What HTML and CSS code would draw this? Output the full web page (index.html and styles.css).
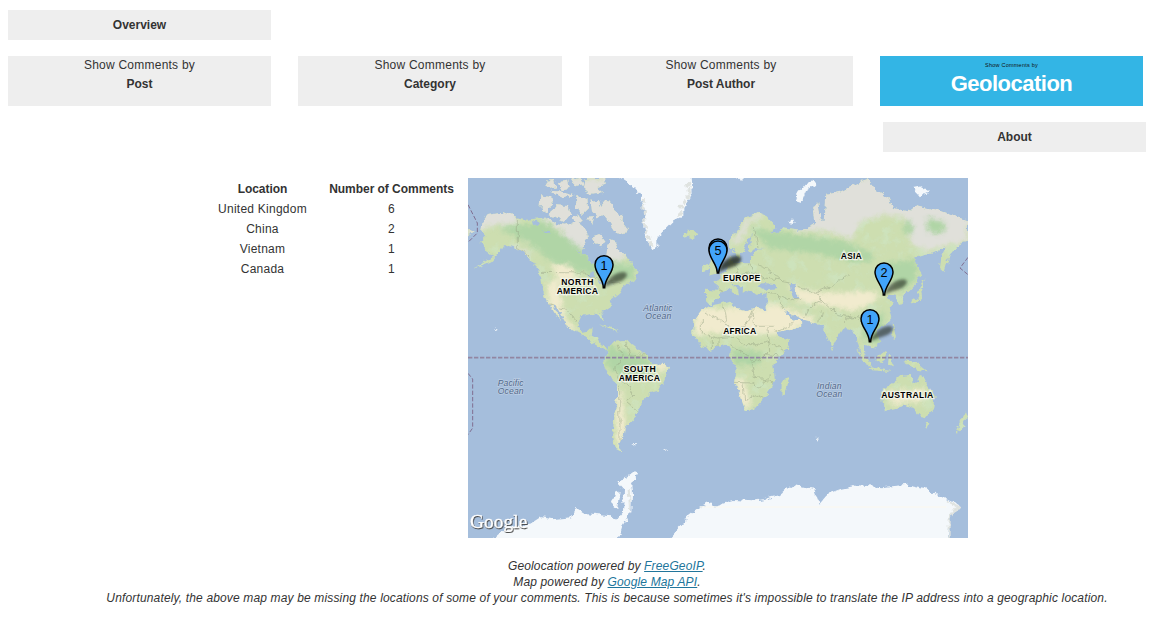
FILE: index.html
```html
<!DOCTYPE html>
<html lang="en">
<head>
<meta charset="utf-8">
<title>Comments by Geolocation</title>
<link rel="stylesheet" href="styles.css">
</head>
<body>
<nav>
  <a class="tab single">Overview</a>
  <div class="tabs">
    <a class="tab"><span>Show Comments by</span><b>Post</b></a>
    <a class="tab"><span>Show Comments by</span><b>Category</b></a>
    <a class="tab"><span>Show Comments by</span><b>Post Author</b></a>
    <a class="tab active"><span>Show Comments by</span><b>Geolocation</b></a>
  </div>
  <a class="tab single about">About</a>
</nav>
<main>
  <table>
    <thead><tr><th class="loc">Location</th><th class="num">Number of Comments</th></tr></thead>
    <tbody>
      <tr><td>United Kingdom</td><td>6</td></tr>
      <tr><td>China</td><td>2</td></tr>
      <tr><td>Vietnam</td><td>1</td></tr>
      <tr><td>Canada</td><td>1</td></tr>
    </tbody>
  </table>
  <svg class="map" width="500" height="360" viewBox="0 0 1500 1080">
    <defs>
      <filter id="rough" x="0" y="0" width="1500" height="1080" filterUnits="userSpaceOnUse">
        <feTurbulence type="fractalNoise" baseFrequency=".05" numOctaves="3" seed="4"/>
        <feDisplacementMap in="SourceGraphic" scale="20" xChannelSelector="R" yChannelSelector="G"/>
      </filter>
      <filter id="soft" x="-30%" y="-30%" width="160%" height="160%"><feGaussianBlur stdDeviation="8"/></filter>
      <filter id="blur" x="-30%" y="-50%" width="160%" height="200%"><feGaussianBlur stdDeviation="4"/></filter>
      <filter id="speckle" x="0" y="0" width="1500" height="1080" filterUnits="userSpaceOnUse">
        <feTurbulence type="fractalNoise" baseFrequency=".025" numOctaves="4" seed="9"/>
        <feColorMatrix values="0 0 0 0 .62  0 0 0 0 .80  0 0 0 0 .58  4 0 0 0 -2"/>
      </filter>
      <clipPath id="land">
        <path d="M45 125L60 108 100 102 145 118 180 125 215 120 250 130 275 148 300 165 300 195 330 225 355 232 380 262 400 275 415 240 418 200 440 195 455 220 475 235 490 262 515 285 500 310 470 320 455 345 430 365 425 385 400 402 408 425 396 420 385 405 340 415 328 440 342 462 362 458 372 447 368 470 390 478 398 500 418 512 412 520 385 502 360 485 330 465 302 450 285 420 262 380 252 378 280 430 265 415 240 370 225 340 220 300 200 260 185 240 160 215 130 205 105 205 90 228 70 250 20 272 75 235 50 215 40 190 55 175 40 155Z"/>
        <path d="M418 512L440 488 470 486 496 500 520 520 545 545 548 556 585 558 600 568 586 605 570 638 545 645 530 668 512 690 508 710 485 735 470 750 468 768 450 800 465 825 440 812 432 780 440 706 448 656 450 618 425 596 404 552 418 530Z"/>
        <path d="M714 370L714 335 748 338 750 322 735 312 756 298 778 275 782 255 790 235 798 255 840 256 852 235 865 215 895 213 860 212 842 220 845 190 855 165 838 185 825 225 810 242 802 220 786 212 786 190 816 140 836 115 871 105 896 115 926 150 906 162 931 165 946 148 961 150 990 155 1015 152 1040 142 1035 100 1050 70 1058 125 1070 130 1075 50 1120 40 1180 10 1200 0 1207 25 1260 58 1275 90 1320 100 1345 82 1410 97 1500 128 1500 190 1470 200 1445 230 1430 282 1416 270 1420 235 1435 205 1410 218 1370 228 1335 240 1345 262 1360 285 1340 320 1315 345 1300 350 1308 378 1293 380 1280 350 1262 348 1255 360 1278 368 1262 390 1270 420 1250 445 1225 458 1240 490 1210 512 1188 495 1188 520 1198 545 1180 525 1170 490 1150 450 1130 447 1090 508 1064 444 1045 435 1005 425 965 402 946 392 975 428 998 425 1000 445 922 464 905 425 896 385 896 345 865 350 846 335 831 345 811 320 790 322 816 345 806 358 782 330 761 345 748 365 725 380Z"/>
        <path d="M721 385L786 370 796 390 836 400 866 390 898 395 916 440 931 475 966 485 955 515 916 560 921 611 899 640 886 666 861 694 831 696 821 666 801 616 806 571 786 536 790 515 771 500 726 515 701 505 676 470 676 430 701 395Z"/>
        <path d="M941 616L951 602 965 596 951 650 940 650ZM1240 641L1280 611 1300 594 1325 591 1335 611 1350 614 1358 588 1375 621 1400 656 1395 696 1375 721 1355 716 1335 691 1315 681 1280 691 1248 699ZM1370 735L1384 735 1378 749ZM1494 700L1500 718 1478 756 1462 768 1470 746Z"/>
        <path d="M725 295L723 260 735 238 748 250 752 285 738 292ZM705 280L706 262 720 258 722 275ZM650 170L660 158 682 160 688 172 670 185Z"/>
        <path d="M1375 300L1360 340 1362 360 1330 382 1325 374 1350 358 1360 320ZM1272 430L1278 450 1284 482 1270 478ZM1225 536L1245 518 1255 522 1248 555 1222 552ZM1168 516L1195 540 1210 565 1192 558ZM1210 568L1260 578 1268 582 1205 576ZM1262 535L1275 535 1268 550 1275 565 1260 560ZM1310 547L1345 552 1380 580 1350 576 1325 568ZM1088 508L1096 508 1094 520ZM390 438L430 450 455 462 420 452Z"/>
        <path d="M220 52L250 58 255 80 240 88 240 105 218 90ZM262 82L300 84 308 108 290 130 265 118 245 112ZM215 125L245 120 262 142 240 146ZM262 135L290 140 325 130 352 152 360 180 345 205 340 228 300 200 270 170 258 155ZM368 68L392 66 398 85 412 68 430 72 440 98 462 112 460 130 480 155 465 172 440 158 425 135 405 112 388 118 372 100ZM325 55L358 60 360 90 340 110 325 90ZM310 118L330 112 345 130 325 138ZM352 120L375 118 370 140ZM235 8L258 5 262 25 240 30ZM270 12L300 8 305 30 280 35ZM310 5L335 0 345 18 322 25ZM245 38L290 42 320 50 280 58ZM350 0L408 0 410 20 385 28 405 45 370 50 345 28ZM375 175L395 168 410 190 400 205 380 195ZM425 185L450 195 440 215 420 210ZM0 150L20 160 0 172Z"/>
      </clipPath>
    </defs>
    <rect width="1500" height="1080" fill="#a5bedc"/>
    <g filter="url(#rough)">
      <g clip-path="url(#land)">
        <rect width="1500" height="1080" fill="#cddeb0"/>
        <rect width="1500" height="1080" filter="url(#speckle)" opacity=".5"/>
        <g filter="url(#soft)">
          <path fill="#e0e0da" d="M0 90L150 90 145 135 60 145 0 180ZM210 110L280 160 340 240 460 250 480 220 500 0 200 0ZM970 0L1500 0 1500 190 1440 200 1380 220 1330 200 1310 120 1250 110 1180 130 1150 185 1090 160 980 158ZM160 165L205 175 200 205 165 190ZM130 200L180 220 190 240 140 215ZM786 205L830 130 870 105 890 115 850 130 815 190Z"/>
          <path fill="#b0d5a6" d="M90 150L230 130 370 235 500 265 500 310 410 300 340 280 260 260 190 200ZM850 150L960 165 1130 190 1220 230 1210 250 1130 250 1060 230 900 210ZM1250 260L1340 240 1350 300 1300 340 1270 310ZM1310 130L1330 130 1335 170 1305 165ZM1375 120L1430 130 1430 165 1380 165ZM420 500L545 545 560 590 470 600 410 560ZM790 510L890 525 870 560 800 560ZM1190 440L1250 400 1240 500 1180 480Z"/>
          <path fill="#f1ebce" d="M240 310L270 305 290 420 330 460 300 455 240 380ZM250 255L310 265 330 320 270 310ZM680 390L900 390 920 470 780 465 680 470ZM895 370L1010 410 1050 430 920 470ZM1000 335L1080 345 1210 340 1240 355 1160 400 1060 380 980 370ZM800 605L830 600 850 690 815 680ZM1255 645L1370 630 1370 670 1270 680ZM560 548L605 555 575 590ZM445 620L460 640 475 750 460 820 446 800ZM960 320L1000 330 990 360Z"/>
        </g>
        <path fill="#a5bedc" d="M868 325L885 315 920 318 930 330 895 335ZM965 315L985 315 980 335 992 362 980 365 968 340ZM350 290L375 280 385 298ZM392 306L425 316 402 322ZM220 155L245 160 240 168ZM195 125L215 135 200 145Z"/>
        <g fill="none" stroke="#96a184" stroke-width="2" opacity=".7">
          <path d="M148 118V208L190 235M222 283L350 285 380 300 440 315 460 315M242 380L285 392 310 405 325 432M450 500L465 535 440 570 455 610 480 620 500 650 475 670 510 700M455 620L456 800M470 490L490 535 530 530 545 545"/>
          <path d="M716 405L745 420 800 460 840 430 855 398 860 445 920 445M700 420V465L745 480 800 475 825 500 865 500 905 490 950 520M765 380L775 440 800 460M730 480V510M750 480V510M790 500L830 525 855 550 900 530 940 535M802 613L850 615 875 630 910 595M825 616L830 670 870 650 890 660M850 550L860 600 890 600 915 620M900 450L905 520 875 550"/>
          <path d="M752 335L765 342M770 290L790 310 820 300 845 310 860 290 840 256M800 260L810 290 850 280 890 300 930 305M860 150L870 210M870 260L895 270 940 310 965 315M992 325L1030 340 1060 365 1025 390 1010 420M1055 360L1110 410 1170 420 1190 450 1235 440M1060 400L1055 430M1130 440L1145 410 1170 430M1195 440L1210 480M890 345L930 350 960 365 1000 365M930 350L945 390M920 460L960 445 975 430M1040 345L1090 325 1140 290"/>
        </g>
      </g>
      <g fill="#f4f8fb">
        <path d="M450 -5L490 20 516 50 531 100 526 150 536 190 555 215 571 200 571 180 596 150 616 130 646 115 646 90 671 50 668 -5Z"/>
        <path d="M70 1090L115 1052 185 1040 220 1018 255 1024 310 1018 325 990 350 1005 430 1012 440 1030 465 1000 468 935 445 910 485 900 510 885 490 920 492 950 490 1000 465 1040 450 1090Z"/>
        <path d="M595 1090L640 1045 655 1020 700 985 720 975 740 985 800 966 850 970 890 962 940 950 975 920 1040 937 1055 980 1085 945 1120 932 1170 922 1240 928 1320 920 1370 930 1430 960 1475 980 1445 1020 1440 1090Z"/>
        <path d="M990 45L1010 20 1035 5 1045 20 1015 40 1000 75 983 70ZM1335 30L1360 25 1385 40 1355 55ZM810 -5H830L820 15ZM960 132L975 122 980 135ZM475 900L500 880 510 890 485 920ZM446 935L458 940 450 995 430 980ZM1043 778L1052 780 1048 788ZM490 795L505 796 500 802ZM78 448L88 454 82 456Z"/>
        <path d="M590 812L600 820" stroke="#f4f8fb" stroke-width="3"/>
      </g>
      <g fill="none" stroke="#dfe3e0" stroke-width="9"><path d="M658 15L666 50 640 80 638 115M526 60L533 160 550 205" stroke-dasharray="14 5"/><path d="M1440 970L1470 985 1445 1020V1090M482 935L486 990" stroke-width="6"/></g>
    </g>
    <path d="M695 987H1435" stroke="#faf9f2" stroke-width="5"/>
    <path d="M0 539H1500" stroke="#9286a2" stroke-width="5" stroke-dasharray="13 5"/>
    <g fill="none" stroke="#806f91" stroke-width="3" stroke-dasharray="13 6"><path d="M0 80L28 135V165L0 193M0 586L14 603V750L0 770M1500 238L1476 270 1500 290"/></g>
    <g class="continent">
      <text x="328" y="321" textLength="97">NORTH</text><text x="328" y="348" textLength="124">AMERICA</text>
      <text x="821" y="308" textLength="112">EUROPE</text><text x="815" y="467" textLength="99">AFRICA</text>
      <text x="1150" y="243" textLength="63">ASIA</text><text x="515" y="582" textLength="96">SOUTH</text>
      <text x="514" y="609" textLength="124">AMERICA</text><text x="1318" y="660" textLength="156">AUSTRALIA</text>
    </g>
    <g class="ocean">
      <text x="570" y="399" textLength="88">Atlantic</text><text x="571" y="423" textLength="78">Ocean</text>
      <text x="128" y="624" textLength="78">Pacific</text><text x="128" y="648" textLength="78">Ocean</text>
      <text x="1084" y="632" textLength="74">Indian</text><text x="1084" y="656" textLength="78">Ocean</text>
    </g>
    <defs>
      <g id="pin">
        <path d="M0 0C7-20 22-38 45-45 70-53 77-37 58-24 43-14 18-12 0 0Z" fill="#252d22" opacity=".62" filter="url(#blur)"/>
        <path d="M-2 0C-2-28-27-43-27-69A27 27 0 0 1 27-69C27-43 2-28 2 0Z" fill="#42a4fa" stroke="#000" stroke-width="4.5"/>
      </g>
    </defs>
    <g class="count">
      <use href="#pin" x="408" y="329"/><text x="408" y="276">1</text>
      <use href="#pin" x="750" y="279"/><use href="#pin" x="750" y="285"/><text x="750" y="230">5</text>
      <use href="#pin" x="1248" y="351"/><text x="1248" y="297">2</text>
      <use href="#pin" x="1206" y="491"/><text x="1206" y="437">1</text>
    </g>
    <text class="logo" x="6" y="1049" textLength="172">Google</text>
  </svg>
</main>
<footer>
  <p>Geolocation powered by <a>FreeGeoIP</a>.</p>
  <p>Map powered by <a>Google Map API</a>.</p>
  <p class="note">Unfortunately, the above map may be missing the locations of some of your comments. This is because sometimes it's impossible to translate the IP address into a geographic location.</p>
</footer>
</body>
</html>
```
FILE: styles.css
```css
body {
  margin: 0;
  height: 623px;
  overflow: hidden;
  background: #fff;
  color: #333;
  font: 12px/20px "Liberation Sans", Arial, sans-serif;
}
nav { padding: 10px 12px 0 8px; }
.tab {
  display: block;
  box-sizing: border-box;
  background: #eee;
  text-align: center;
}
.tab span, .tab b { display: block; }
.tab span { font-size: 12px; letter-spacing: .23px; line-height: 18px; }
.tab b { line-height: 20px; }
.single { width: 263px; height: 30px; line-height: 30px; font-weight: bold; }
.tabs {
  display: grid;
  grid-template-columns: 263px 264px 264px 263px;
  justify-content: space-between;
  margin: 16px 0;
}
.tabs .tab { height: 50px; }
.active { background: #33b5e5; }
.tabs .active span { font-size: 5.5px; color: #111; }
.tabs .active b { font-size: 22px; letter-spacing: -.5px; color: #fff; }
.about { margin-left: 875px; }
main { display: flex; align-items: flex-start; padding: 26px 0 0 206px; }
table { border-collapse: collapse; text-align: center; width: 262px; margin-top: 1px; }
th, td { padding: 0; height: 20px; }
th { letter-spacing: -.04px; }
td { letter-spacing: .25px; }
.loc { width: 113px; }
.num { width: 145px; padding-right: 4px; }
td + td { padding-right: 4px; }
.map { display: block; overflow: hidden; }
.continent { font: bold 26px "Liberation Sans", Arial, sans-serif; text-anchor: middle; fill: #000; stroke: #f5f7ed; stroke-width: 7px; stroke-opacity: .85; paint-order: stroke; }
.ocean { font: italic 26px "Liberation Sans", Arial, sans-serif; text-anchor: middle; fill: #526989; stroke: #bdcee4; stroke-width: 4px; paint-order: stroke; }
.count { font: 38px "Liberation Sans", Arial, sans-serif; text-anchor: middle; }
.logo { font: 58px "Liberation Serif", serif; fill: #fff; stroke: #fff; stroke-width: 1px; filter: drop-shadow(2px 3px 2px #444); }
footer { padding: 20px 0 0 59px; text-align: center; font-size: 12px; font-style: italic; line-height: 16px; letter-spacing: .15px; }
footer p { margin: 0; white-space: nowrap; }
footer a { color: #21759b; text-decoration: underline; }
```
